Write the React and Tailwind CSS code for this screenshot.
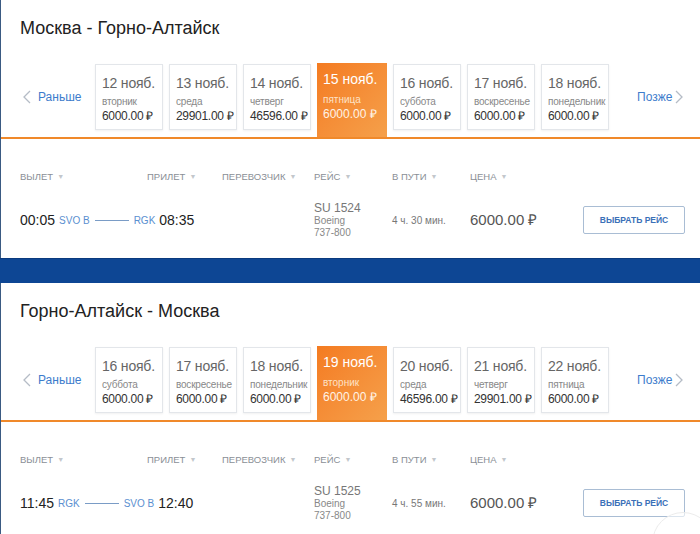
import React from "react";

const trips = [
  {
    title: "Москва - Горно-Алтайск",
    days: [
      { d: "12 нояб.", w: "вторник", p: "6000.00 ₽" },
      { d: "13 нояб.", w: "среда", p: "29901.00 ₽" },
      { d: "14 нояб.", w: "четверг", p: "46596.00 ₽" },
      { d: "15 нояб.", w: "пятница", p: "6000.00 ₽", active: true },
      { d: "16 нояб.", w: "суббота", p: "6000.00 ₽" },
      { d: "17 нояб.", w: "воскресенье", p: "6000.00 ₽" },
      { d: "18 нояб.", w: "понедельник", p: "6000.00 ₽" },
    ],
    dep: "00:05",
    from: "SVO B",
    to: "RGK",
    arr: "08:35",
    flight: "SU 1524",
    duration: "4 ч. 30 мин.",
  },
  {
    title: "Горно-Алтайск - Москва",
    days: [
      { d: "16 нояб.", w: "суббота", p: "6000.00 ₽" },
      { d: "17 нояб.", w: "воскресенье", p: "6000.00 ₽" },
      { d: "18 нояб.", w: "понедельник", p: "6000.00 ₽" },
      { d: "19 нояб.", w: "вторник", p: "6000.00 ₽", active: true },
      { d: "20 нояб.", w: "среда", p: "46596.00 ₽" },
      { d: "21 нояб.", w: "четверг", p: "29901.00 ₽" },
      { d: "22 нояб.", w: "пятница", p: "6000.00 ₽" },
    ],
    dep: "11:45",
    from: "RGK",
    to: "SVO B",
    arr: "12:40",
    flight: "SU 1525",
    duration: "4 ч. 55 мин.",
  },
];

function Chevron({ dir }) {
  return (
    <svg width="8" height="14" viewBox="0 0 8 14" fill="none">
      {dir === "left" ? (
        <polyline points="7,1 1,7 7,13" stroke="#b5bcc6" strokeWidth="1.3" />
      ) : (
        <polyline points="1,1 7,7 1,13" stroke="#b5bcc6" strokeWidth="1.3" />
      )}
    </svg>
  );
}

function DayTile({ day }) {
  if (day.active) {
    return (
      <div className="shrink-0 whitespace-nowrap w-[70px] h-[74px] bg-gradient-to-br from-[#f47b20] to-[#f5a04a] text-white pl-[6px] pt-[9px] leading-none">
        <div className="text-[14px]">{day.d}</div>
        <div className="text-[10px] mt-[9px] text-[#fde2c6]">{day.w}</div>
        <div className="text-[12px] mt-[3px] text-[#fff3e6]">{day.p}</div>
      </div>
    );
  }
  return (
    <div className="shrink-0 whitespace-nowrap overflow-hidden w-[68px] h-[66px] mb-[7px] bg-white border border-[#e3e6ea] shadow-[0_1px_2px_rgba(0,0,0,0.06)] pl-[6px] pt-[11px] leading-none">
      <div className="text-[14px] text-[#666] tracking-[-0.2px]">{day.d}</div>
      <div className="text-[10px] mt-[7px] text-[#888] tracking-[-0.2px]">{day.w}</div>
      <div className="text-[12px] mt-[3px] text-[#333] tracking-[-0.3px]">{day.p}</div>
    </div>
  );
}

function HeadCell({ label, w }) {
  return (
    <div className={`${w} flex items-center gap-[4px] text-[9.5px] text-[#8a8f96] uppercase`}>
      <span>{label}</span>
      <span className="text-[#c3c7cc] text-[7px]">▼</span>
    </div>
  );
}

function TripCard({ trip }) {
  return (
    <div className="bg-white border-l border-[#3a5a82]">
      <div className="pt-[17px] pl-[19px] text-[18px] leading-[22px] text-[#222]">{trip.title}</div>

      <div className="mt-[24px] flex items-end gap-[6px]">
        <div className="shrink-0 w-[88px] h-[66px] mb-[7px] flex items-center gap-[7px] pl-[22px]">
          <Chevron dir="left" />
          <span className="text-[12px] text-[#3d7ccc]">Раньше</span>
        </div>
        {trip.days.map((day) => (
          <DayTile key={day.d} day={day} />
        ))}
        <div className="shrink-0 h-[66px] mb-[7px] flex items-center gap-[3px] pl-[22px]">
          <span className="text-[12px] text-[#3d7ccc]">Позже</span>
          <Chevron dir="right" />
        </div>
      </div>
      <div className="h-[2px] bg-[#f0892a]" />

      <div className="pl-[19px] pt-[32px] pb-[20px]">
        <div className="flex h-[12px]">
          <HeadCell label="Вылет" w="w-[127px]" />
          <HeadCell label="Прилет" w="w-[75px]" />
          <HeadCell label="Перевозчик" w="w-[92px]" />
          <HeadCell label="Рейс" w="w-[78px]" />
          <HeadCell label="В пути" w="w-[78px]" />
          <HeadCell label="Цена" w="w-[113px]" />
        </div>

        <div className="mt-[19px] flex items-center h-[36px]">
          <div className="w-[294px] flex items-center">
            <span className="text-[14px] text-[#222]">{trip.dep}</span>
            <span className="ml-[4px] text-[10px] text-[#5b8fd0]">{trip.from}</span>
            <span className="mx-[5px] w-[34px] h-px bg-[#7a9cc6]" />
            <span className="text-[10px] text-[#5b8fd0]">{trip.to}</span>
            <span className="ml-[4px] text-[14px] text-[#222]">{trip.arr}</span>
          </div>
          <div className="w-[78px] leading-none">
            <div className="text-[12px] text-[#777]">{trip.flight}</div>
            <div className="text-[10px] text-[#888] mt-[2px]">Boeing</div>
            <div className="text-[10px] text-[#888] mt-[2px]">737-800</div>
          </div>
          <div className="w-[78px] text-[10px] text-[#777]">{trip.duration}</div>
          <div className="w-[113px] text-[15px] text-[#555]">6000.00 ₽</div>
          <button className="w-[102px] h-[28px] border border-[#a9bdd4] rounded-[2px] text-[8.5px] font-bold text-[#3b70b8] bg-white">
            ВЫБРАТЬ РЕЙС
          </button>
        </div>
      </div>
    </div>
  );
}

export default function App() {
  return (
    <div
      className="relative w-[700px] h-[534px] overflow-hidden bg-[#0d4694]"
      style={{ fontFamily: '"Liberation Sans", Arial, sans-serif' }}
    >
      <TripCard trip={trips[0]} />
      <div className="h-[25px] border-t border-[#0a3a7e]" />
      <TripCard trip={trips[1]} />
      <div className="absolute left-[652px] top-[512px] w-[62px] h-[62px] rounded-full border border-[#ececec] bg-white/60" />
    </div>
  );
}
